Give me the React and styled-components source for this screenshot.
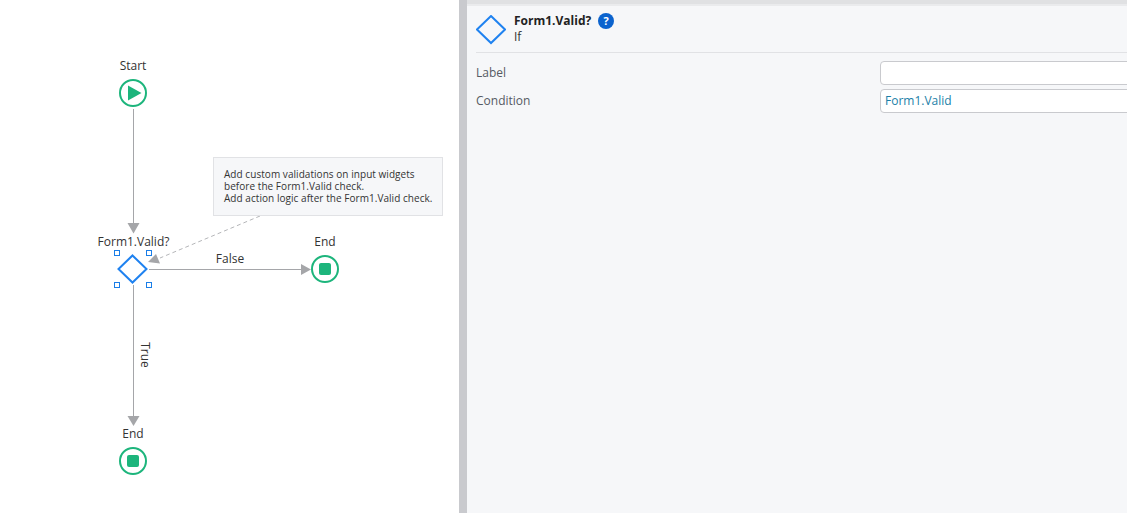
import React from 'react'
import styled, {createGlobalStyle} from 'styled-components'

const Global = createGlobalStyle`
  html, body { margin: 0; padding: 0; height: 100%; background: #fff; }
  body { font-family: "Open Sans", "Liberation Sans", sans-serif; font-size: 12px; color: #333; }
  #root { height: 100%; }
`

const Page = styled.div`
  display: flex;
  width: 1127px;
  height: 513px;
  overflow: hidden;
`

const Canvas = styled.div`
  position: relative;
  flex: 0 0 459px;
  height: 100%;
  background: #fff;
`

const Flow = styled.svg`
  position: absolute;
  left: 0;
  top: 0;
`

const NodeLabel = styled.span`
  position: absolute;
  left: ${props => props.x}px;
  top: ${props => props.y}px;
  transform: translateX(-50%);
  font-size: 12px;
  line-height: 16px;
  color: #333;
  white-space: nowrap;
`

const TrueLabel = styled(NodeLabel)`
  transform: translate(-50%, -50%) rotate(90deg);
`

const Note = styled.div`
  position: absolute;
  left: 213px;
  top: 157px;
  box-sizing: border-box;
  width: 230px;
  height: 59px;
  padding: 10px 10px 0;
  background: #f6f7f9;
  border: 1px solid #e1e2e5;
  font-size: 10px;
  line-height: 12px;
  letter-spacing: 0.05px;
  color: #333;
  white-space: nowrap;
`

const Splitter = styled.div`
  flex: 0 0 8px;
  background: #c9cace;
`

const Panel = styled.div`
  flex: 1;
  min-width: 0;
  display: flex;
  flex-direction: column;
  background: #f6f7f9;
`

const TopStrip = styled.div`
  height: 4px;
  background: #e0e1e3;
  border-bottom: 2px solid #eaebed;
`

const Header = styled.div`
  display: flex;
  align-items: flex-start;
  gap: 8px;
  height: 47px;
  margin-left: 9px;
  box-sizing: border-box;
  padding-top: 7px;
  border-bottom: 1px solid #e1e2e5;
`

const HeaderIcon = styled.svg`
  margin-top: 2px;
`

const TitleRow = styled.div`
  display: flex;
  align-items: center;
  gap: 7px;
  height: 16px;
`

const Title = styled.span`
  font-weight: 700;
  font-size: 12px;
  line-height: 16px;
  color: #222;
`

const Help = styled.span`
  display: flex;
  align-items: center;
  justify-content: center;
  width: 16px;
  height: 16px;
  border-radius: 50%;
  background: #0b63ce;
  color: #fff;
  font-weight: 700;
  font-size: 11px;
  line-height: 16px;
`

const Subtitle = styled.div`
  font-size: 12px;
  line-height: 15px;
  color: #333;
`

const Fields = styled.div`
  display: flex;
  flex-direction: column;
  gap: 4px;
  padding: 8px 0 0 9px;
`

const Row = styled.div`
  display: grid;
  grid-template-columns: 404px 1fr;
  align-items: center;
  height: 24px;
`

const FieldLabel = styled.label`
  padding-bottom: 2px;
  font-size: 12px;
  color: #555a63;
`

const Field = styled.div`
  box-sizing: border-box;
  height: 24px;
  margin-right: -10px;
  padding-left: 4px;
  background: #fff;
  border: 1px solid #c9cace;
  border-radius: 4px;
  font-size: 12px;
  line-height: 22px;
  color: #1c7fa8;
`

const App = () => (
  <Page>
    <Global />
    <Canvas>
      <Flow width="459" height="513" viewBox="0 0 459 513">
        <g stroke="#a5a6a9" strokeWidth="1" fill="none">
          <path d="M133.5 109V225" />
          <path d="M149 269.5H302" />
          <path d="M133.5 285V417" />
          <path d="M260 216L160 258" stroke="#b5b6b9" strokeDasharray="4 3" />
        </g>
        <g fill="#a5a6a9">
          <path d="M127.500 223H139.500L133.500 233.500Z" />
          <path d="M127.500 416H139.500L133.500 426Z" />
          <path d="M301 264L311 269.500L301 275Z" />
          <path d="M148 262L156 254L160 263.500Z" />
        </g>

        <circle cx="133" cy="93" r="13" fill="#fff" stroke="#1db57c" strokeWidth="2" />
        <path d="M128 85.500V100.500L141.500 93Z" fill="#1db57c" />

        <circle cx="325" cy="269" r="13" fill="#fff" stroke="#1db57c" strokeWidth="2" />
        <rect x="319" y="263" width="12" height="12" rx="2" fill="#1db57c" />

        <circle cx="133" cy="461" r="13" fill="#fff" stroke="#1db57c" strokeWidth="2" />
        <rect x="127" y="455" width="12" height="12" rx="2" fill="#1db57c" />

        <path d="M132.500 255.500L146.500 269L132.500 282.500L118.500 269Z" fill="#fff" stroke="#1f82f0" strokeWidth="2" />
        <g fill="#fff" stroke="#1a7ee8" strokeWidth="1">
          <rect x="114.500" y="250.500" width="5" height="5" />
          <rect x="146.500" y="250.500" width="5" height="5" />
          <rect x="114.500" y="282.500" width="5" height="5" />
          <rect x="146.500" y="282.500" width="5" height="5" />
        </g>
      </Flow>
      <NodeLabel x={133} y={58}>Start</NodeLabel>
      <NodeLabel x={133.5} y={234}>Form1.Valid?</NodeLabel>
      <NodeLabel x={325} y={234}>End</NodeLabel>
      <NodeLabel x={230} y={251}>False</NodeLabel>
      <TrueLabel x={145} y={355}>True</TrueLabel>
      <NodeLabel x={133} y={426}>End</NodeLabel>
      <Note>
        Add custom validations on input widgets<br />
        before the Form1.Valid check.<br />
        Add action logic after the Form1.Valid check.
      </Note>
    </Canvas>
    <Splitter />
    <Panel>
      <TopStrip />
      <Header>
        <HeaderIcon width="30" height="30" viewBox="0 0 30 30">
          <path d="M15 1L29 14.500L15 28L1 14.500Z" fill="none" stroke="#1f82f0" strokeWidth="2" />
        </HeaderIcon>
        <div>
          <TitleRow>
            <Title>Form1.Valid?</Title>
            <Help>?</Help>
          </TitleRow>
          <Subtitle>If</Subtitle>
        </div>
      </Header>
      <Fields>
        <Row>
          <FieldLabel>Label</FieldLabel>
          <Field />
        </Row>
        <Row>
          <FieldLabel>Condition</FieldLabel>
          <Field>Form1.Valid</Field>
        </Row>
      </Fields>
    </Panel>
  </Page>
)

export default App
